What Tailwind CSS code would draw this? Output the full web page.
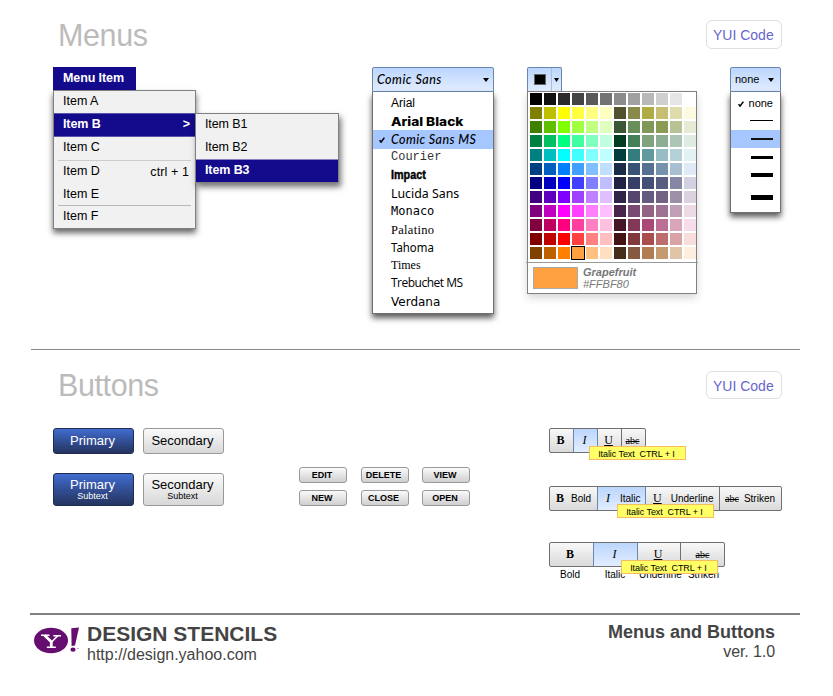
<!DOCTYPE html>
<html lang="en">
<head>
<meta charset="utf-8">
<title>Design Stencils - Menus and Buttons</title>
<script src="https://cdn.jsdelivr.net/npm/@tailwindcss/browser@4"></script>
</head>
<body class="bg-white">
<main class="w-[833px] h-[696px] overflow-hidden bg-white text-black font-['Liberation_Sans',Arial,sans-serif] whitespace-nowrap">

<section class="ml-[31px] w-[769px] h-[350px] border-b border-[#888] pt-5 flex flex-col">
  <header class="flex justify-between items-center h-[29px] pl-[27px] pr-[18px]">
    <h1 class="text-[30.5px] leading-[30px] tracking-[-0.4px] text-[#bbb]">Menus</h1>
    <a class="w-[76px] h-[29px] rounded-[6px] border border-[#e0e0e0] pl-[6px] text-[14px] leading-[28px] text-[#6666cc]">YUI Code</a>
  </header>
  <div class="flex items-start mt-[18px] pl-[22px]">

    <div class="w-[319px] text-[12.5px] leading-[21px]">
      <div class="w-[83px] h-[23px] bg-[#140a8c] text-white font-bold pl-[10px] leading-[23px] tracking-[-0.1px]">Menu Item</div>
      <div class="flex items-start">
        <ul class="w-[143px] h-[139px] shrink-0 bg-[#f1f1f1] border border-[#808080] shadow-[0_4px_6px_rgba(0,0,0,0.6)]">
          <li class="h-[22px] pl-[9px]">Item A</li>
          <li class="h-[24px] pl-[9px] pr-[5px] bg-[#140a8c] border-y border-[#5c55ad] text-white font-bold tracking-[-0.1px] flex justify-between"><span>Item B</span><span>&gt;</span></li>
          <li class="h-[23px] pl-[9px]">Item C</li>
          <li class="h-[23px] mx-1 pl-[5px] pr-[2px] border-t border-[#ccc] flex justify-between"><span>Item D</span><span class="leading-[22px] tracking-[0.1px]">ctrl + 1</span></li>
          <li class="h-[22px] pl-[9px] leading-[22px]">Item E</li>
          <li class="h-[23px] mx-1 pl-[5px] border-t border-[#b8b8b8]">Item F</li>
        </ul>
        <ul class="w-[144px] h-[70px] shrink-0 -ml-px mt-[23px] bg-[#f1f1f1] border border-[#808080] shadow-[2px_4px_6px_rgba(0,0,0,0.55)]">
          <li class="h-[22px] pl-[9px] tracking-[-0.1px]">Item B1</li>
          <li class="h-[23px] pl-[9px] leading-[23px] tracking-[-0.1px]">Item B2</li>
          <li class="h-[23px] pl-[9px] bg-[#140a8c] border-t border-[#8883c0] text-white font-bold tracking-[-0.1px]">Item B3</li>
        </ul>
      </div>
    </div>

    <div class="w-[122px]">
      <div class="h-[25px] rounded-t-[2px] border border-[#6a86ae] bg-linear-to-b from-[#bcd6fd] to-[#e2edff] flex items-center justify-between pl-[4px] pr-[4px]">
        <span class="font-['Lato',sans-serif] italic text-[12.5px] font-medium tracking-[0.5px] pt-px">Comic Sans</span>
        <svg class="w-[6px] h-[4px]" viewBox="0 0 6 4"><path d="M0 0h6L3 4z"/></svg>
      </div>
      <ul class="h-[222px] pt-[2px] border border-t-0 border-[#707070] bg-white shadow-[0_4px_6px_rgba(0,0,0,0.65)] text-[12px] leading-[18px]">
        <li class="h-[18px] pl-[18px]">Arial</li>
        <li class="h-[18px] pl-[18px] font-['Inter',sans-serif] font-extrabold leading-[19px]"><span class="inline-block origin-left scale-x-[1.14]">Arial Black</span></li>
        <li class="h-[19px] pl-[6px] bg-[#a6c6ff] flex items-center font-['Lato',sans-serif] italic text-[12.5px] font-medium tracking-[0.4px]"><svg class="w-[6px] h-[6px] mr-[6px]" viewBox="0 0 7 7" fill="none" stroke="#000" stroke-width="1.8"><path d="M.7 3.6 2.4 6 6.3.7"/></svg>Comic Sans MS</li>
        <li class="h-[17px] pl-[18px] font-['Liberation_Mono',monospace] text-[#333] leading-[17px]">Courier</li>
        <li class="h-[18px] pl-[18px] font-bold"><span class="inline-block origin-left scale-x-[0.9] [-webkit-text-stroke:0.4px_black]">Impact</span></li>
        <li class="h-[18px] pl-[18px] font-['Noto_Sans',sans-serif] leading-[19px]"><span class="inline-block origin-left scale-x-[1.03]">Lucida Sans</span></li>
        <li class="h-[18px] pl-[18px] font-['DejaVu_Sans_Mono',monospace]">Monaco</li>
        <li class="h-[18px] pl-[18px] font-['Liberation_Serif',serif] leading-[20px] text-[12.5px] tracking-[0.3px]">Palatino</li>
        <li class="h-[18px] pl-[18px] font-['Noto_Sans',sans-serif] leading-[20px]"><span class="inline-block origin-left scale-x-[0.95]">Tahoma</span></li>
        <li class="h-[18px] pl-[18px] font-['Liberation_Serif',serif]">Times</li>
        <li class="h-[18px] pl-[18px] font-['Open_Sans',sans-serif] tracking-[-0.5px]">Trebuchet MS</li>
        <li class="h-[18px] pl-[18px] font-['DejaVu_Sans',sans-serif] leading-[20px]">Verdana</li>
      </ul>
    </div>

    <div class="w-[170px] ml-[33px]">
      <div class="w-[35px] h-[24px] rounded-t-[2px] border border-b-0 border-[#6a86ae] bg-linear-to-b from-[#bcd6fd] to-[#e2edff] flex items-center">
        <div class="w-[24px] h-full border-r border-[#b4bcc9] flex items-center pl-[6px]"><i class="w-[12px] h-[11px] bg-black border border-[#666]"></i></div>
        <svg class="w-[5px] h-[4px] ml-[2px]" viewBox="0 0 5 4"><path d="M0 0h5L2.5 4z"/></svg>
      </div>
      <div class="h-[203px] border border-[#808080] bg-white shadow-[0_4px_8px_rgba(0,0,0,0.16)]">
        <div id="palette" class="h-[170px] pt-px pl-[2px] grid grid-cols-[repeat(12,12px)] auto-rows-[12px] gap-[2px] content-start"></div>
        <div class="h-[31px] -mx-[2px] px-[7px] border-t border-[#999] flex items-center">
          <i class="w-[45px] h-[22px] bg-[#ffa040] border border-[#aaa]"></i>
          <div class="ml-[5px] text-[11px] leading-[12px] italic text-[#777]"><b>Grapefruit</b><br>#FFBF80</div>
        </div>
      </div>
    </div>

    <div class="w-[51px] ml-[33px]">
      <div class="h-[25px] rounded-t-[2px] border border-[#6a86ae] bg-linear-to-b from-[#bcd6fd] to-[#e2edff] flex items-center justify-between pl-[4px] pr-[6px] text-[11px]">none<svg class="w-[6px] h-[4px]" viewBox="0 0 6 4"><path d="M0 0h6L3 4z"/></svg></div>
      <div class="h-[121px] border border-t-0 border-[#707070] bg-white shadow-[0_4px_6px_rgba(0,0,0,0.65)] flex flex-col items-end">
        <div class="h-[23px] w-full flex items-center justify-end pr-[7px] text-[11px]"><svg class="w-[6px] h-[6px] mr-[5px]" viewBox="0 0 7 7" fill="none" stroke="#000" stroke-width="1.8"><path d="M.7 3.6 2.4 6 6.3.7"/></svg>none</div>
        <div class="h-[15px] w-full flex justify-end pt-[5px] pr-[7px]"><i class="w-[23px] h-px bg-black"></i></div>
        <div class="h-[18px] w-full flex items-center justify-end pr-[7px] bg-[#a6c6ff]"><i class="w-[22px] h-[2px] bg-[#111]"></i></div>
        <div class="h-[18px] flex items-center pr-[7px]"><i class="w-[22px] h-[3px] bg-black"></i></div>
        <div class="h-[18px] flex items-center pr-[7px]"><i class="w-[22px] h-[4px] bg-black"></i></div>
        <div class="h-[26px] flex items-center pr-[7px]"><i class="w-[22px] h-[5px] bg-black"></i></div>
      </div>
    </div>
  </div>
</section>

<section class="ml-[30px] w-[770px] h-[265px] border-b-2 border-[#808080] pt-[21px] flex flex-col">
  <header class="flex justify-between items-center h-[28px] pl-7 pr-[18px]">
    <h1 class="text-[30.5px] leading-[29px] tracking-[-0.4px] text-[#bbb]">Buttons</h1>
    <a class="w-[76px] h-[28px] rounded-[6px] border border-[#e0e0e0] pl-[6px] text-[14px] leading-[28px] text-[#6666cc]">YUI Code</a>
  </header>
  <div class="flex items-start mt-[29px] pl-[23px]">

    <div class="w-[246px] grid grid-cols-[81px_81px] gap-x-[9px] gap-y-[19px] text-[13px] text-center">
      <button class="h-[26px] rounded-[3px] border border-[#202c4e] bg-linear-to-b from-[#416cd0] to-[#24345f] text-white leading-[24px] pr-[2px]">Primary</button>
      <button class="h-[26px] rounded-[3px] border border-[#999] bg-linear-to-b from-[#fafafa] to-[#d8d8d8] leading-[24px] pr-[2px]">Secondary</button>
      <button class="h-[33px] rounded-[3px] border border-[#202c4e] bg-linear-to-b from-[#416cd0] to-[#24345f] text-white leading-[13px] flex flex-col items-center pt-[4px] pr-[2px]">Primary<small class="text-[9px] leading-[11px]">Subtext</small></button>
      <button class="h-[33px] rounded-[3px] border border-[#999] bg-linear-to-b from-[#fafafa] to-[#d8d8d8] leading-[13px] flex flex-col items-center pt-[4px] pr-[2px]">Secondary<small class="text-[9px] leading-[11px]">Subtext</small></button>
    </div>

    <div class="w-[250px] mt-[39px] grid grid-cols-[48px_48px_48px] auto-rows-[16px] gap-x-[13.5px] gap-y-[7px] font-bold text-[9px] leading-[14px]">
      <button class="rounded-[3px] border border-[#999] bg-linear-to-b from-[#fafafa] to-[#cfcfcf] pr-[2px]">EDIT</button>
      <button class="rounded-[3px] border border-[#999] bg-linear-to-b from-[#fafafa] to-[#cfcfcf] pr-[2px]">DELETE</button>
      <button class="rounded-[3px] border border-[#999] bg-linear-to-b from-[#fafafa] to-[#cfcfcf] pr-[2px]">VIEW</button>
      <button class="rounded-[3px] border border-[#999] bg-linear-to-b from-[#fafafa] to-[#cfcfcf] pr-[2px]">NEW</button>
      <button class="rounded-[3px] border border-[#999] bg-linear-to-b from-[#fafafa] to-[#cfcfcf] pr-[2px]">CLOSE</button>
      <button class="rounded-[3px] border border-[#999] bg-linear-to-b from-[#fafafa] to-[#cfcfcf] pr-[2px]">OPEN</button>
    </div>

    <div class="w-[233px] flex flex-col items-start gap-[33px] text-[10px] leading-[23px]">
      <div class="relative">
        <div class="w-[97px] h-[25px] rounded-[2px] border border-[#707070] bg-linear-to-b from-[#f8f8f8] to-[#dadada] flex text-center font-['Liberation_Serif',serif] text-[12px]">
          <b class="w-[23px] pr-[2px]">B</b>
          <i class="w-[25px] border-x border-[#6a86ae] bg-linear-to-b from-[#bcd6fd] to-[#e2edff] pr-[2px]">I</i>
          <span class="w-[23px] pr-[2px] underline">U</span>
          <s class="w-[24px] border-l border-[#707070] text-[10px] pr-[2px]">abc</s>
        </div>
        <div class="absolute left-[40px] top-[18px] w-[97px] h-[14px] border border-[#f5bd5e] bg-[#ffff66] text-[9px] leading-[14px] text-center tracking-[-0.08px] pr-[2px]">Italic Text&nbsp; CTRL + I</div>
      </div>
      <div class="relative">
        <div class="w-[233px] h-[25px] rounded-[2px] border border-[#707070] bg-linear-to-b from-[#f8f8f8] to-[#dadada] flex">
          <div class="w-[47px] pl-[6px] flex gap-[7px]"><b class="font-['Liberation_Serif',serif] text-[12px]">B</b>Bold</div>
          <div class="w-[49px] border-x border-[#6a86ae] bg-linear-to-b from-[#bcd6fd] to-[#e2edff] pl-[8px] flex gap-[10px]"><i class="font-['Liberation_Serif',serif] text-[12px]">I</i>Italic</div>
          <div class="w-[73px] pl-[7px] flex gap-[9px]"><u class="font-['Liberation_Serif',serif] text-[12px]">U</u>Underline</div>
          <div class="w-[62px] border-l border-[#707070] pl-[5px] flex gap-[5px]"><s class="font-['Liberation_Serif',serif]">abc</s>Striken</div>
        </div>
        <div class="absolute left-[68px] top-[18px] w-[97px] h-[14px] border border-[#f5bd5e] bg-[#ffff66] text-[9px] leading-[14px] text-center tracking-[-0.08px] pr-[2px]">Italic Text&nbsp; CTRL + I</div>
      </div>
      <div class="relative -mt-[2px]">
        <div class="w-[176px] h-[25px] rounded-[2px] border border-[#707070] bg-linear-to-b from-[#f8f8f8] to-[#dadada] flex text-center font-['Liberation_Serif',serif] text-[12px]">
          <b class="w-[43px] pr-[3px]">B</b>
          <i class="w-[45px] border-x border-[#6a86ae] bg-linear-to-b from-[#bcd6fd] to-[#e2edff] pr-[2px]">I</i>
          <u class="w-[42px] pr-[2px]">U</u>
          <s class="w-[44px] border-l border-[#707070] text-[10px]">abc</s>
        </div>
        <div class="flex text-center leading-[14px] mt-px w-[178px]"><span class="w-[42px]">Bold</span><span class="w-[46px] pl-[2px]">Italic</span><span class="w-[43px] pl-[2px]">Underline</span><span class="w-[47px]">Striken</span></div>
        <div class="absolute left-[72px] top-[18px] w-[97px] h-[14px] border border-[#f5bd5e] bg-[#ffff66] text-[9px] leading-[14px] text-center tracking-[-0.08px] pr-[2px]">Italic Text&nbsp; CTRL + I</div>
      </div>
    </div>
  </div>
</section>

<footer class="flex items-start pl-[34px] pr-[58px] pt-[8px] text-[#444]">
  <svg class="w-[46px] h-[28px] mt-[3px]" viewBox="0 0 46 28">
    <g fill="#660e70">
      <ellipse cx="17" cy="14.5" rx="17" ry="12.8"/>
      <path d="M37.3 2.200 45 1.400 41 19.500 37.600 20z"/>
      <ellipse cx="39" cy="23.700" rx="2.600" ry="2.100"/>
      <circle cx="44" cy="22.500" r=".5"/>
    </g>
    <g fill="none" stroke="#fff">
      <path stroke-width="1.500" d="M7 9.200h8.500M19.300 9.700h7.700M12.800 21.200h9"/>
      <path stroke-width="2.800" d="M10.500 9.200 17.300 15.800V21"/>
      <path stroke-width="1.600" d="M23.800 9.800 17.800 15.800"/>
    </g>
  </svg>
  <div class="ml-[7px] grow">
    <h2 class="font-bold text-[21px] leading-[22px]">DESIGN STENCILS</h2>
    <p class="text-[16px] leading-[20px]">http://design.yahoo.com</p>
  </div>
  <div class="text-right">
    <h2 class="font-bold text-[18px] leading-[19px]">Menus and Buttons</h2>
    <p class="text-[16px] leading-[20px] tracking-[-0.1px]">ver. 1.0</p>
  </div>
</footer>
</main>
<script>
const rows = [
"000000 111111 2b2b2b 444444 5a5a5a 737373 8c8c8c a1a1a1 b8b8b8 cfcfcf e6e6e6 ffffff",
"808000 bfbf00 ffff00 ffff40 ffff80 ffffbf 52522f 89894a afab45 c5be73 dfdcab fcfae1",
"408000 60bf00 80ff00 a0ff40 c0ff80 dfffbf 3b5736 668f5a 7f9757 8a9b55 b7c296 e6ebd5",
"008040 00bf60 00ff80 40ffa0 80ffc0 bfffdf 033d21 438059 7fa37c 8dae94 acc6b5 ddebe2",
"008080 00bfbf 00ffff 40ffff 80ffff bfffff 033d3d 347d7e 609a9f 96bdc4 b5d1d7 e2f1f4",
"004080 0060bf 0080ff 40a0ff 80c0ff bfdfff 1b2c48 385376 57708f 7792ac a8bed1 deebf6",
"000080 0000bf 0000ff 4040ff 8080ff bfbfff 212143 373e68 444f75 585e82 8687a4 d2d1e1",
"400080 6000bf 8000ff a040ff c080ff dfbfff 302449 54466f 655a7f 726284 9e8fa9 dcd1df",
"800080 bf00bf ff00ff ff40ff ff80ff ffbfff 4a234a 794a72 936386 9d7292 c0a0b6 ecdae5",
"800040 bf0060 ff0080 ff40a0 ff80c0 ffbfdf 451528 823857 a94a76 bc6f95 d8a5bb f7dde9",
"800000 bf0000 ff0000 ff4040 ff8080 ffbfbf 441415 82393c aa4d4e bc6e6e d8a3a4 f8dddd",
"804000 bf6000 ff8000 ffa040 ffc080 ffdfbf 482c1b 855a40 b27c51 c49b71 e1c4a8 fdeee0"];
document.getElementById('palette').innerHTML = rows.map((row, r) => row.split(' ').map((c, i) =>
  `<i class="${r === 11 && i === 3 ? 'outline outline-black' : ''}" style="background:#${c}"></i>`).join('')).join('');
</script>
</body>
</html>
